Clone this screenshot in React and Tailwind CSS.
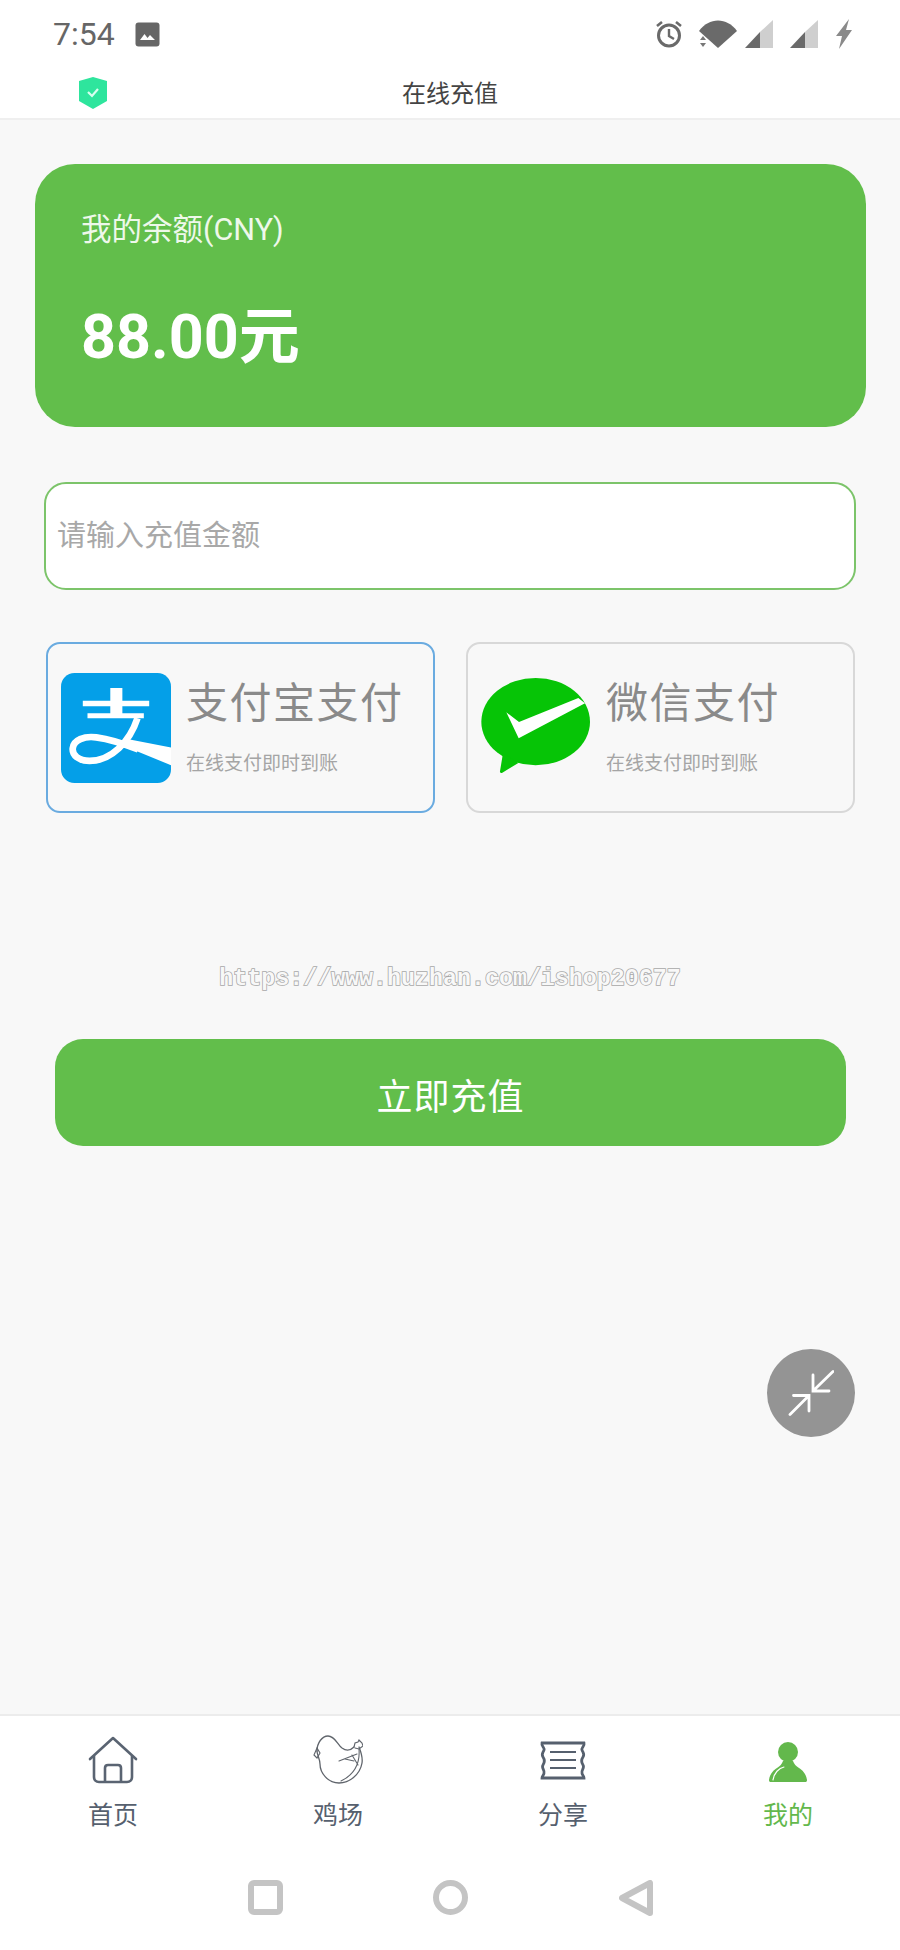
import { useState } from "react";

const CJK = "font-['Roboto','Noto_Sans_CJK_SC',sans-serif]";

function AlarmIcon() {
  return (
    <svg width="28" height="28" viewBox="0 0 28 28" fill="none" stroke="#6a6a6a" strokeWidth="3">
      <circle cx="14" cy="15.5" r="10.5" />
      <path d="M14 9v7l5 3" strokeWidth="2.4" />
      <path d="M2 6l5-4M26 6l-5-4" strokeWidth="2.6" />
    </svg>
  );
}

function WifiIcon() {
  return (
    <svg width="40" height="30" viewBox="0 0 40 30" fill="#6a6a6a">
      <path d="M1 12C11 -2 29 -2 39 12L20 29Z" />
      <path d="M2 21l3-4 3 4zM2 24l3 4 3-4z" fill="#777" />
    </svg>
  );
}

function SignalIcon() {
  return (
    <svg width="30" height="30" viewBox="0 0 30 30">
      <path d="M29 1V29H16V13Z" fill="#cfcfcf" />
      <path d="M16 13V29H1Z" fill="#6a6a6a" />
    </svg>
  );
}

function BoltIcon() {
  return (
    <svg width="20" height="30" viewBox="0 0 20 30" fill="#8a8a8a">
      <path d="M15 0L2 17H8L5 30L18 11H12Z" />
    </svg>
  );
}

function ImageIcon() {
  return (
    <svg width="25" height="25" viewBox="0 0 25 25">
      <rect x="0.5" y="0.5" width="24" height="24" rx="3" fill="#666" />
      <path d="M5 18l4.5-6 3 4 2.500-3 5 5z" fill="#fff" />
    </svg>
  );
}

function ShieldIcon() {
  return (
    <svg width="28" height="32" viewBox="0 0 28 32">
      <path d="M14 0L28 4V24L14 32L0 24V4Z" fill="#2ee59d" />
      <path d="M9 15l4 4 6-7" fill="none" stroke="#d9fff0" strokeWidth="2.2" />
    </svg>
  );
}

function AlipayLogo() {
  return (
    <svg width="110" height="110" viewBox="0 0 328 328" className="shrink-0">
      <rect width="328" height="328" rx="40" fill="#049fe8" />
      <path d="M65 83H147V45H183V83H263V99H183V120H247V135H79V120H147V99H65Z" fill="#fff" />
      <path
        d="M228 135C205 205 150 262 85 262C52 262 33 245 35 225C37 200 70 187 105 192C150 198 190 212 230 228"
        fill="none"
        stroke="#fff"
        strokeWidth="20"
      />
      <path d="M190 195L328 222V275L170 210Z" fill="#fff" />
    </svg>
  );
}

function WechatLogo() {
  return (
    <svg width="110" height="100" viewBox="0 0 330 300" className="shrink-0">
      <ellipse cx="164" cy="131" rx="163" ry="131" fill="#06c406" />
      <path d="M66 225L57 280C56 285 60 286 64 284L112 255Z" fill="#06c406" />
      <path d="M76 103L114 132L292 60L312 76L113 181Z" fill="#fff" />
    </svg>
  );
}

function PayCard({ logo, title, active }) {
  return (
    <div
      className={`flex h-[171px] w-[389px] items-center rounded-[14px] border-2 pl-[13px] pr-2 ${
        active ? "border-[#6aabe0]" : "border-[#d8d8d8]"
      }`}
    >
      {logo}
      <div className="ml-[15px] flex flex-col">
        <p className="text-[42px] leading-[50px] tracking-[1.500px] text-[#8a8a8a]">{title}</p>
        <p className="mt-[22px] text-[19px] leading-[26px] text-[#a5a5a5]">在线支付即时到账</p>
      </div>
    </div>
  );
}

function HomeIcon() {
  return (
    <svg width="50" height="50" viewBox="0 0 50 50" fill="none" stroke="#5a6472" strokeWidth="2.6" strokeLinejoin="round">
      <path d="M2 24L25 3L48 24" strokeLinecap="round" />
      <path d="M6 21V42C6 45 8 47 11 47H39C42 47 44 45 44 42V21" />
      <path d="M17 47V33C17 31 18 30 20 30H30C32 30 33 31 33 33V47" />
    </svg>
  );
}

function ChickenIcon() {
  return (
    <svg width="50" height="50" viewBox="0 0 50 50" fill="none" stroke="#60656c" strokeWidth="1.1" strokeLinecap="round">
      <path d="M4 16C4 8 9 1 15 1C22 1 24 9 29 13C33 16 37 16 41 12" strokeWidth="1.3" />
      <path d="M4 16C4 20 7 24 7 29C7 38 15 48 26 48C36 48 47 40 49 28C50 22 48 17 46 12" strokeWidth="1.3" />
      <path d="M41 12L42 8L45 7L46 5L49 8L50 11L46 14L42 13" />
      <path d="M1 20L4 13L7 18L4 23Z" />
      <path d="M26 26L44 19M32 24L41 26M39 20L45 30M46 14C47 26 44 38 28 46" />
    </svg>
  );
}

function TicketIcon() {
  return (
    <svg width="50" height="50" viewBox="0 0 50 50" fill="none" stroke="#56606e" strokeWidth="2.8">
      <path d="M4 8H46C47 11 43 13 44 15C45 18 47 19 45 22C43 25 43 27 45 30C47 33 43 35 44 38C44 40 46 41 46 43H4C4 41 6 40 6 38C7 35 3 33 5 30C7 27 7 25 5 22C3 19 5 18 6 15C7 13 3 11 4 8Z" />
      <path d="M12 17H38M12 25H38M12 33H38" strokeWidth="2.2" />
    </svg>
  );
}

function PersonIcon() {
  return (
    <svg width="50" height="50" viewBox="0 0 50 50">
      <circle cx="25" cy="17" r="10" fill="#63b84c" />
      <path d="M6 45C7 38 11 35 14 33C17 31 19 29 20 26H30C31 29 33 31 36 33C39 35 43 38 44 45C44 46.500 43.500 47 42 47H8C6.500 47 6 46.500 6 45Z" fill="#63b84c" />
      <path d="M10 45C11 38 16 33 21 32" fill="none" stroke="#fff" strokeWidth="1.2" strokeLinecap="round" />
    </svg>
  );
}

const TABS = [
  { label: "首页", icon: <HomeIcon />, x: "w-[226px]" },
  { label: "鸡场", icon: <ChickenIcon />, x: "w-[224px]" },
  { label: "分享", icon: <TicketIcon />, x: "w-[226px]" },
  { label: "我的", icon: <PersonIcon />, x: "w-[224px]", active: true },
];

export default function App() {
  const [amount, setAmount] = useState("");

  return (
    <div className={`relative flex h-[1950px] w-[900px] flex-col bg-[#f8f8f8] ${CJK}`}>
      {/* status bar */}
      <div className="flex h-[60px] items-center justify-between bg-white pl-[53px] pr-[46px] pt-[8px]">
        <div className="flex items-center gap-[20px]">
          <span className="text-[32px] leading-none text-[#666]">7:54</span>
          <ImageIcon />
        </div>
        <div className="flex items-center gap-[6px]">
          <AlarmIcon />
          <span className="ml-[9px]">
            <WifiIcon />
          </span>
          <SignalIcon />
          <span className="ml-[9px]">
            <SignalIcon />
          </span>
          <span className="ml-[9px]">
            <BoltIcon />
          </span>
        </div>
      </div>

      {/* title bar */}
      <div className="relative flex h-[60px] items-center justify-center border-b-2 border-[#efefef] bg-white pt-[10px]">
        <span className="absolute left-[79px] top-[17px]">
          <ShieldIcon />
        </span>
        <h1 className="text-[24px] font-normal text-[#444]">在线充值</h1>
      </div>

      <main className="flex flex-1 flex-col">
        <section className="ml-[35px] mr-[34px] mt-[44px] h-[263px] rounded-[40px] bg-[#62be4b] pl-[46px] pt-[45px] text-white">
          <p className="text-[30.500px] leading-[42px] text-[#eef8ea]">我的余额(CNY)</p>
          <p className="mt-[46px] text-[61px] font-bold leading-[80px]">88.00元</p>
        </section>

        <input
          value={amount}
          onChange={(e) => setAmount(e.target.value)}
          placeholder="请输入充值金额"
          className="mx-[44px] mt-[55px] h-[108px] rounded-[22px] border-2 border-[#7cc46a] bg-white px-[11px] text-[29px] text-[#555] outline-none placeholder:text-[#a8a8a8]"
        />

        <div className="ml-[46px] mr-[45px] mt-[52px] flex justify-between">
          <PayCard logo={<AlipayLogo />} title="支付宝支付" active />
          <PayCard logo={<WechatLogo />} title="微信支付" />
        </div>

        <p className="mt-[147px] text-center font-['Liberation_Mono',monospace] text-[23.300px] font-bold leading-[38px] text-[#f8f8f8] [-webkit-text-stroke:1.600px_#a8a8a8] [paint-order:stroke_fill]">
          https://www.huzhan.com/ishop20677
        </p>

        <button className="ml-[55px] mr-[54px] mt-[41px] h-[107px] rounded-[28px] bg-[#62be4b] pt-[10px] text-[36px] tracking-[1px] text-white">
          立即充值
        </button>
      </main>

      {/* collapse button, floats over the page */}
      <button className="absolute left-[767px] top-[1349px] flex h-[88px] w-[88px] items-center justify-center rounded-full bg-[#949494]">
        <svg width="46" height="46" viewBox="0 0 46 46" fill="none" stroke="#fff" strokeWidth="2.800" strokeLinecap="round">
          <path d="M45 1.500L25 21M25 5V21H41" />
          <path d="M2 44.500L21 25.500M5.500 25.500H21V41" />
        </svg>
      </button>

      {/* tab bar */}
      <nav className="flex h-[125px] border-t-2 border-[#ececec] bg-white pt-[19px]">
        {TABS.map((tab) => (
          <div key={tab.label} className={`flex flex-col items-center ${tab.x}`}>
            {tab.icon}
            <span className={`mt-[14px] text-[25px] leading-[34px] ${tab.active ? "text-[#63b84c]" : "text-[#56606e]"}`}>
              {tab.label}
            </span>
          </div>
        ))}
      </nav>

      {/* android nav bar */}
      <div className="flex h-[111px] items-start justify-center gap-[151px] bg-white pl-[1px] pt-[41px]">
        <span className="h-[35px] w-[35px] rounded-[6px] border-[6px] border-[#c4c4c4]" />
        <span className="-ml-[1px] h-[35px] w-[35px] rounded-full border-[6px] border-[#c4c4c4]" />
        <svg width="35" height="36" viewBox="0 0 35 36" fill="none" stroke="#c4c4c4" strokeWidth="6" strokeLinejoin="round">
          <path d="M31 3V33L3 18Z" />
        </svg>
      </div>
    </div>
  );
}
